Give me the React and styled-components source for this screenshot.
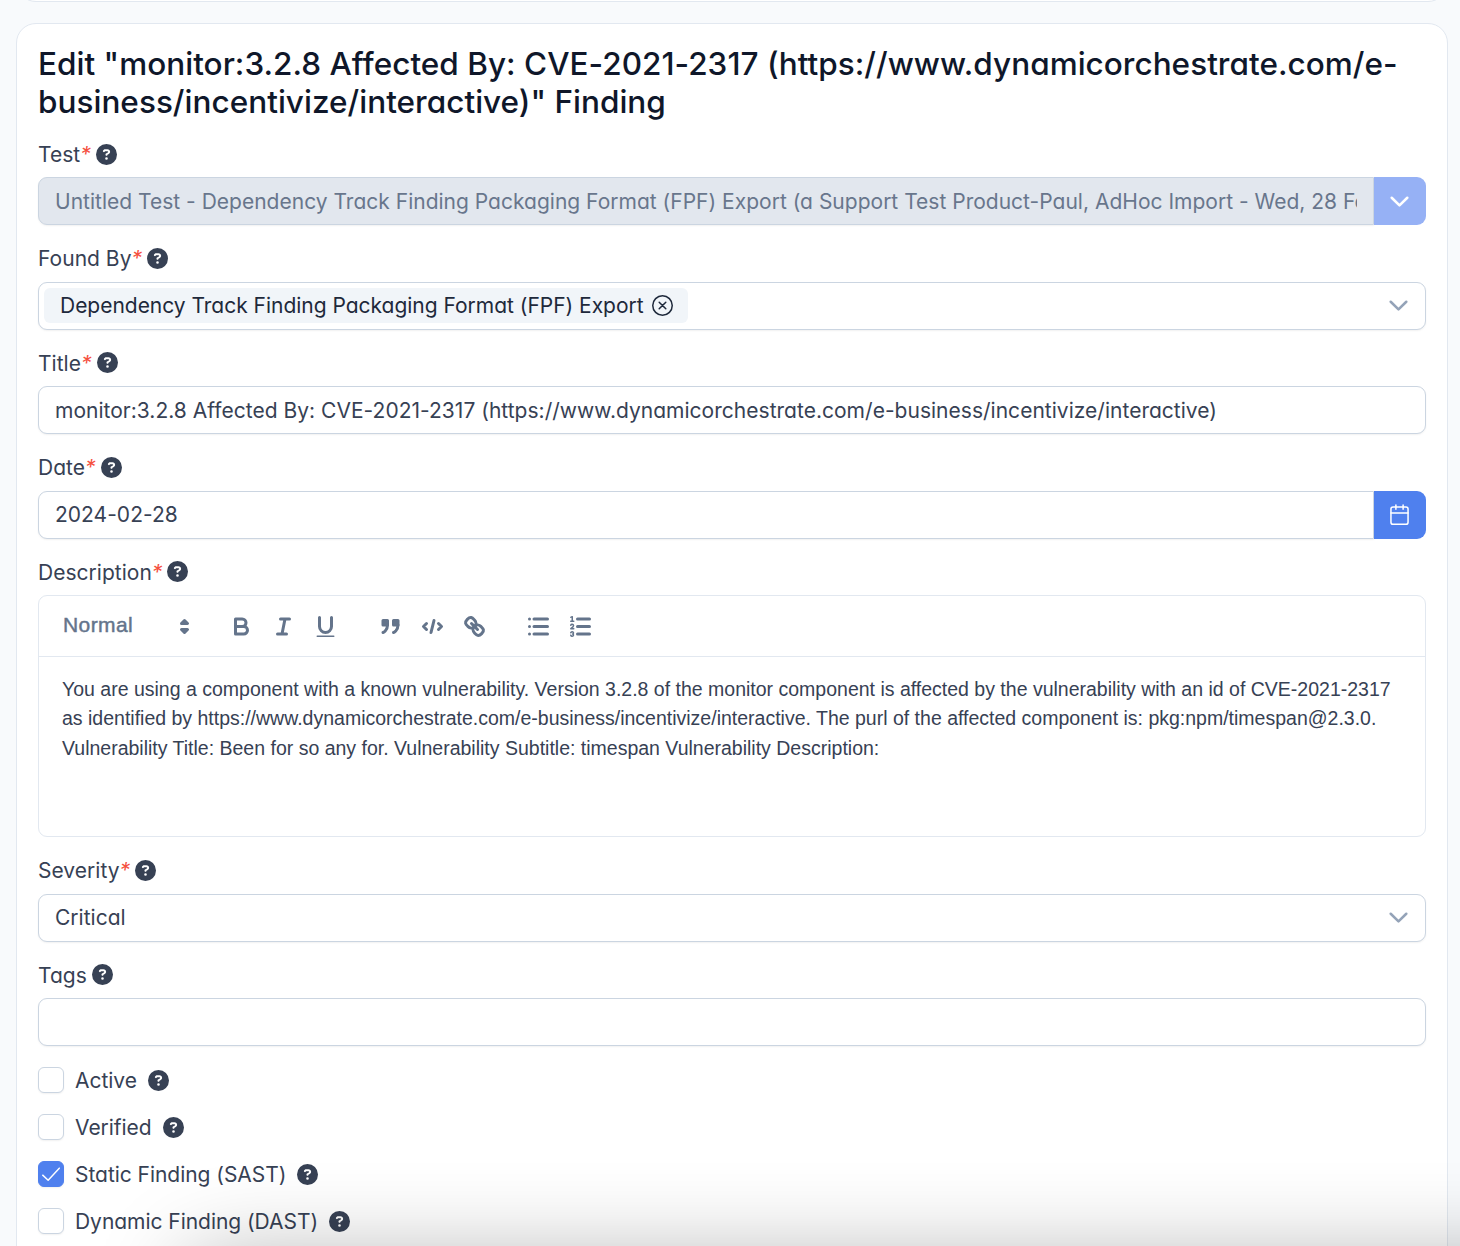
import React from "react";
import styled, { createGlobalStyle, css } from "styled-components";
import { FaCircleQuestion } from "react-icons/fa6";

const Global = createGlobalStyle`
  *, *::before, *::after { box-sizing: border-box; }
  html, body { margin: 0; }
  body {
    height: 1246px;
    overflow: hidden;
    background: #f8fafc;
    color: #374154;
    font-family: Inter, "Liberation Sans", sans-serif;
    font-feature-settings: "cv11";
    font-size: 21px;
    letter-spacing: 0.02px;
  }
`;

const Page = styled.main`
  position: relative;
  height: 1246px;
  padding: 0 12px 0 16px;
  overflow: hidden;
`;

const Card = styled.section`
  background: #fff;
  border: 1px solid #e2e8f0;
  border-radius: 20px;
  padding: 21px;
`;

const PreviousCard = styled(Card)`
  height: 60px;
  margin-top: -58px;
`;

const FormCard = styled(Card)`
  height: 1400px;
  margin-top: 21px;
`;

const Title = styled.h1`
  margin: 0;
  font-size: 31.5px;
  line-height: 38px;
  font-weight: 500;
  letter-spacing: 0.02px;
  color: #0f172a;
`;

const Field = styled.div`
  padding-top: 17px;
`;

const Label = styled.div`
  display: flex;
  align-items: center;
  height: 32px;
  margin-bottom: 7.4px;
`;

const LabelText = styled.span`
  padding-top: 1px;
`;

const Star = styled.span`
  color: #f5503f;
  font-style: italic;
`;

const Help = styled(FaCircleQuestion)`
  width: 21px;
  height: 21px;
  flex: none;
  margin-left: ${(p) => p.$gap || 5}px;
  color: #374154;
`;

const Control = styled.div`
  display: flex;
  align-items: center;
  height: 48px;
  border: 1px solid #cbd5e1;
  border-radius: 9px;
  background: #fff;
  box-shadow: 0 1px 2px rgba(18, 18, 23, 0.06);
  padding: 0 16px;
  white-space: nowrap;
  ${(p) =>
    p.$joined &&
    css`
      flex: 1;
      min-width: 0;
      border-right: 1px solid #cbd5e1;
      border-radius: 9px 0 0 9px;
    `}
  ${(p) =>
    p.$disabled &&
    css`
      background: #e2e7ee;
      color: #68768c;
      letter-spacing: 0.008px;
    `}
`;

const Value = styled.span`
  flex: 1;
  min-width: 0;
  overflow: hidden;
  padding-top: 1px;
  line-height: 30px;
`;

const Group = styled.div`
  display: flex;
`;

const Addon = styled.button`
  display: flex;
  align-items: center;
  justify-content: center;
  width: 52px;
  height: 48px;
  padding: 0 1px 0 0;
  border: 0;
  border-radius: 0 9px 9px 0;
  background: ${(p) => (p.$disabled ? "#96b1f5" : "#4f80ee")};
  color: #fff;
`;

const MultiSelect = styled(Control)`
  justify-content: space-between;
  padding: 0 16px 0 5px;
`;

const Chip = styled.span`
  display: flex;
  align-items: center;
  gap: 8px;
  height: 35px;
  margin-bottom: 1px;
  padding: 0 15px 0 16px;
  border-radius: 6px;
  background: #f1f5f9;
  color: #1e293b;
  letter-spacing: -0.02px;
`;

const Editor = styled.div`
  height: 242.2px;
  border: 1px solid #e2e8f0;
  border-radius: 9px;
`;

const Toolbar = styled.div`
  display: flex;
  align-items: center;
  gap: 22.5px;
  height: 61px;
  padding: 1px 12px 0;
  border-bottom: 1px solid #e2e8f0;
  color: #64748b;
`;

const Picker = styled.div`
  display: flex;
  align-items: center;
  justify-content: space-between;
  width: 147px;
  padding-left: 12px;
  font-family: "Liberation Sans", Arial, sans-serif;
  letter-spacing: 0.4px;
  -webkit-text-stroke: 0.45px currentColor;
`;

const PickerText = styled.span`
  margin-top: -3px;
`;

const Tools = styled.div`
  display: flex;
`;

const Tool = styled.button`
  display: flex;
  align-items: center;
  justify-content: center;
  width: 42px;
  height: 36px;
  padding: 0;
  border: 0;
  background: none;
  color: inherit;
`;

const Glyph = styled.svg`
  width: 27px;
  height: 27px;
  fill: none;
  stroke: currentColor;
  stroke-width: ${(p) => p.$weight || 2};
  stroke-linecap: round;
  stroke-linejoin: round;
  .fill { fill: currentColor; }
  .solid { fill: currentColor; stroke: none; }
  .thin { stroke-width: 1; }
`;

const EditorBody = styled.p`
  margin: 0;
  padding: 18px 22px 18px 23px;
  font-family: "Liberation Sans", Arial, sans-serif;
  font-size: 19.5px;
  line-height: 29.5px;
  letter-spacing: 0;
`;

const Checks = styled.div`
  display: flex;
  flex-direction: column;
  gap: 15.6px;
  padding-top: 18.5px;
`;

const CheckRow = styled.label`
  display: flex;
  align-items: center;
  height: 31.5px;
  letter-spacing: -0.04px;
`;

const Box = styled.span`
  display: flex;
  align-items: center;
  justify-content: center;
  width: 26px;
  height: 26px;
  margin-right: 11px;
  border: 1px solid ${(p) => (p.$on ? "#4f80ee" : "#cbd5e1")};
  border-radius: 6px;
  background: ${(p) => (p.$on ? "#4f80ee" : "#fff")};
  box-shadow: 0 1px 2px rgba(18, 18, 23, 0.06);
  color: #fff;
`;

const SmallIcon = styled.svg`
  width: ${(p) => p.$size || 21}px;
  height: ${(p) => p.$size || 21}px;
  flex: none;
  fill: none;
  stroke: ${(p) => p.$color || "currentColor"};
  stroke-width: ${(p) => p.$weight || 1};
  stroke-linecap: round;
  stroke-linejoin: round;
`;

const BottomShade = styled.div`
  position: absolute;
  left: 190px;
  right: -200px;
  top: 1262px;
  height: 200px;
  box-shadow: 0 0 95px rgba(0, 0, 0, 0.33);
  pointer-events: none;
`;

const Chevron = ({ color }) => (
  <SmallIcon viewBox="0 0 14 14" $color={color} $weight={1.7}>
    <path d="M1.8 4.5 7 9.6 12.2 4.5" />
  </SmallIcon>
);

const CalendarIcon = () => (
  <SmallIcon viewBox="0 0 14 14" $weight={1}>
    <rect x="1.3" y="2" width="11.4" height="11.5" rx="1.4" />
    <path d="M1.3 6H12.7M4.6.6V3.5M9.4.6V3.5" />
  </SmallIcon>
);

const RemoveIcon = () => (
  <SmallIcon viewBox="0 0 14 14" $weight={1}>
    <circle cx="7" cy="7" r="6.5" />
    <path d="M4.8 4.8 9.2 9.2M9.2 4.8 4.8 9.2" />
  </SmallIcon>
);

const CheckIcon = () => (
  <SmallIcon viewBox="0 0 14 14" $size={20} $weight={1}>
    <path d="M1.2 7.8 5 11.4 12.8 2.9" />
  </SmallIcon>
);

const FieldLabel = ({ text, required }) => (
  <Label>
    <LabelText>
      {text}
      {required && <Star>*</Star>}
    </LabelText>
    <Help />
  </Label>
);

const tools = [
  [
    ["Bold", <><path d="M5,4H9.5A2.5,2.5,0,0,1,12,6.5v0A2.5,2.5,0,0,1,9.5,9H5V4Z" /><path d="M5,9h5.5A2.5,2.5,0,0,1,13,11.5v0A2.5,2.5,0,0,1,10.5,14H5V9Z" /></>],
    ["Italic", <path d="M7,4H13M5,14H11M8,14 10,4" />],
    ["Underline", <><path d="M5,3V9a4.012,4.012,0,0,0,4,4H9a4.012,4.012,0,0,0,4-4V3" /><rect className="solid" x="3" y="15" width="12" height="1" rx=".5" /></>],
  ],
  [
    ["Quote", <><rect className="fill" x="4" y="5" width="3" height="3" /><rect className="fill" x="11" y="5" width="3" height="3" /><path className="fill" d="M7,8c0,4.031-3,5-3,5" /><path className="fill" d="M14,8c0,4.031-3,5-3,5" /></>],
    ["Code", <path d="M5,7 3,9 5,11M13,7 15,9 13,11M10,5 8,13" />],
    ["Link", <><path d="M7,7 11,11" /><path d="M8.9,4.577a3.476,3.476,0,0,1,.36,4.679A3.476,3.476,0,0,1,4.577,8.9C3.185,7.5,2.035,6.4,4.217,4.217S7.5,3.185,8.9,4.577Z" /><path d="M13.423,9.1a3.476,3.476,0,0,0-4.679-.36,3.476,3.476,0,0,0,.36,4.679c1.392,1.392,2.5,2.542,4.679.36S14.815,10.5,13.423,9.1Z" /></>],
  ],
  [
    ["Bullet list", <path d="M6,4H15M6,9H15M6,14H15M3,4H3M3,9H3M3,14H3" />],
    ["Numbered list", <><path d="M7,4H15M7,9H15M7,14H15" /><path className="thin" d="M2.5,5.5H4.5" /><path className="solid" d="M3.5,6A0.5,0.5,0,0,1,3,5.5V3.085l-0.276.138A0.5,0.5,0,0,1,2.053,3c-0.124-.247-0.023-0.324.224-0.447l1-.5A0.5,0.5,0,0,1,4,2.5v3A0.5,0.5,0,0,1,3.5,6Z" /><path className="thin" d="M4.5,10.5h-2c0-.234,1.85-1.076,1.85-2.234A0.96,0.96,0,0,0,2.5,8.156" /><path className="thin" d="M2.5,14.846a0.959,0.959,0,0,0,1.85-.109A0.7,0.7,0,0,0,3.75,14a0.688,0.688,0,0,0,.6-0.736,0.959,0.959,0,0,0-1.85-.109" /></>],
  ],
];

const checks = [
  ["Active", false],
  ["Verified", false],
  ["Static Finding (SAST)", true],
  ["Dynamic Finding (DAST)", false],
];

export default function App() {
  return (
    <Page>
      <Global />
      <PreviousCard />
      <FormCard>
        <Title>
          Edit "monitor:3.2.8 Affected By: CVE-2021-2317 (https://www.dynamicorchestrate.com/e-<br />
          business/incentivize/interactive)" Finding
        </Title>
        <Field>
          <FieldLabel text="Test" required />
          <Group>
            <Control $joined $disabled>
              <Value>Untitled Test - Dependency Track Finding Packaging Format (FPF) Export (a Support Test Product-Paul, AdHoc Import - Wed, 28 Feb</Value>
            </Control>
            <Addon $disabled aria-label="Open test list"><Chevron /></Addon>
          </Group>
        </Field>
        <Field>
          <FieldLabel text="Found By" required />
          <MultiSelect>
            <Chip>Dependency Track Finding Packaging Format (FPF) Export<RemoveIcon /></Chip>
            <Chevron color="#94a3b8" />
          </MultiSelect>
        </Field>
        <Field>
          <FieldLabel text="Title" required />
          <Control>
            <Value>monitor:3.2.8 Affected By: CVE-2021-2317 (https://www.dynamicorchestrate.com/e-business/incentivize/interactive)</Value>
          </Control>
        </Field>
        <Field>
          <FieldLabel text="Date" required />
          <Group>
            <Control $joined><Value>2024-02-28</Value></Control>
            <Addon aria-label="Open calendar"><CalendarIcon /></Addon>
          </Group>
        </Field>
        <Field>
          <FieldLabel text="Description" required />
          <Editor>
            <Toolbar>
              <Picker>
                <PickerText>Normal</PickerText>
                <Glyph viewBox="0 0 18 18">
                  <path className="fill" d="M7,11 9,13 11,11ZM7,7 9,5 11,7Z" />
                </Glyph>
              </Picker>
              {tools.map((group, i) => (
                <Tools key={i}>
                  {group.map(([name, art]) => (
                    <Tool key={name} aria-label={name}><Glyph viewBox="0 0 18 18">{art}</Glyph></Tool>
                  ))}
                </Tools>
              ))}
            </Toolbar>
            <EditorBody>
              You are using a component with a known vulnerability. Version 3.2.8 of the monitor component is affected by the vulnerability with an id of CVE-2021-2317 as identified by https://www.dynamicorchestrate.com/e-business/incentivize/interactive. The purl of the affected component is: pkg:npm/timespan@2.3.0. Vulnerability Title: Been for so any for. Vulnerability Subtitle: timespan Vulnerability Description:
            </EditorBody>
          </Editor>
        </Field>
        <Field>
          <FieldLabel text="Severity" required />
          <Control><Value>Critical</Value><Chevron color="#94a3b8" /></Control>
        </Field>
        <Field>
          <FieldLabel text="Tags" />
          <Control />
        </Field>
        <Checks>
          {checks.map(([text, on]) => (
            <CheckRow key={text}>
              <Box $on={on}>{on && <CheckIcon />}</Box>
              <LabelText>{text}</LabelText>
              <Help $gap={11} />
            </CheckRow>
          ))}
        </Checks>
      </FormCard>
      <BottomShade />
    </Page>
  );
}
